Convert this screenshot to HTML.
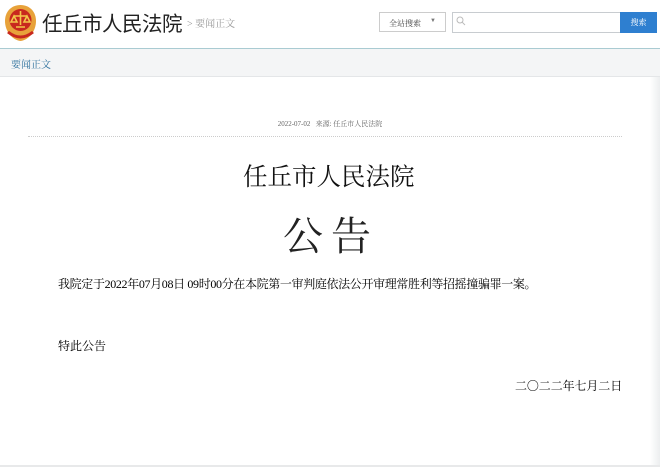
<!DOCTYPE html>
<html><head><meta charset="utf-8"><style>
*{margin:0;padding:0;box-sizing:border-box}
body{width:660px;height:467px;overflow:hidden;background:#fff;font-family:"Liberation Serif","Noto Serif CJK SC",serif;position:relative;color:#222}
.abs{position:absolute;white-space:nowrap}
.hdr{position:absolute;left:0;top:0;width:660px;height:48px;background:#fff}
.nav{position:absolute;left:0;top:48px;width:660px;height:29px;background:#f4f5f6;border-top:1px solid #a9cbd2;border-bottom:1px solid #e4e6e8}
.strip{position:absolute;right:0;top:77px;width:10px;height:390px;background:linear-gradient(to right,#fff,#eceeef)}
</style></head><body>
<div class="hdr"></div>
<svg class="abs" style="left:4px;top:4px" width="33" height="38" viewBox="0 0 33 38">
<path d="M16.5 1 C26 1 32 8 32 17 C32 27 25 36 16.5 37 C8 36 1 27 1 17 C1 8 7 1 16.5 1Z" fill="#e8a23a"/>
<circle cx="16.5" cy="16" r="11" fill="#c8281e"/>
<path d="M16.5 7 v14 M10 12 h13 M10 12 l-3 6 h6z M23 12 l-3 6 h6z M12 23 h9" stroke="#f3c54a" stroke-width="1.6" fill="none"/>
<path d="M4 28 Q16.5 38 29 28" stroke="#c8281e" stroke-width="3" fill="none"/>
</svg>
<div class="abs" style="left:42px;top:7px;font-size:20.5px;color:#222;font-family:'Noto Sans CJK SC',sans-serif;letter-spacing:-0.5px">任丘市人民法院</div>
<div class="abs" style="left:187px;top:15px;font-size:10px;color:#999">&gt; 要闻正文</div>
<div class="abs" style="left:379px;top:12px;width:67px;height:20px;border:1px solid #ccc;background:#fff;font-size:8px;color:#444;padding:5px 0 0 9px">全站搜索<span style="position:absolute;right:9px;top:5px;font-size:6px;color:#777">▼</span></div>
<div class="abs" style="left:452px;top:12px;width:170px;height:21px;border:1px solid #c8ccd0;background:#fff"><svg style="position:absolute;left:3px;top:3px" width="10" height="10"><circle cx="4" cy="4" r="3" stroke="#bbb" fill="none"/><path d="M6 6 l3 3" stroke="#bbb"/></svg></div>
<div class="abs" style="left:620px;top:12px;width:37px;height:21px;background:#2e7fd0;color:#fff;font-size:8px;text-align:center;padding-top:5px">搜索</div>
<div class="nav"></div>
<div class="abs" style="left:11px;top:56px;font-size:10px;color:#2b6f9c">要闻正文</div>
<div class="strip"></div>
<div class="abs" style="left:0;top:465px;width:660px;height:2px;background:#e8e9ea"></div>
<div class="abs" style="left:0;width:660px;text-align:center;top:119px;font-size:7px;color:#666">2022-07-02&nbsp;&nbsp; 来源: 任丘市人民法院</div>
<div class="abs" style="left:28px;top:136px;width:594px;border-top:1px dotted #ccc"></div>
<div class="abs" style="left:243px;top:158px;font-size:24.5px;color:#111">任丘市人民法院</div>
<div class="abs" style="left:283px;top:205px;font-size:40px;color:#222;letter-spacing:8px">公告</div>
<div class="abs" style="left:58px;top:275px;font-size:12px;color:#000;letter-spacing:-0.35px">我院定于2022年07月08日 09时00分在本院第一审判庭依法公开审理常胜利等招摇撞骗罪一案。</div>
<div class="abs" style="left:58px;top:337px;font-size:12px;color:#000">特此公告</div>
<div class="abs" style="left:515px;top:377px;font-size:12px;color:#000;letter-spacing:-0.1px">二〇二二年七月二日</div>
</body></html>
